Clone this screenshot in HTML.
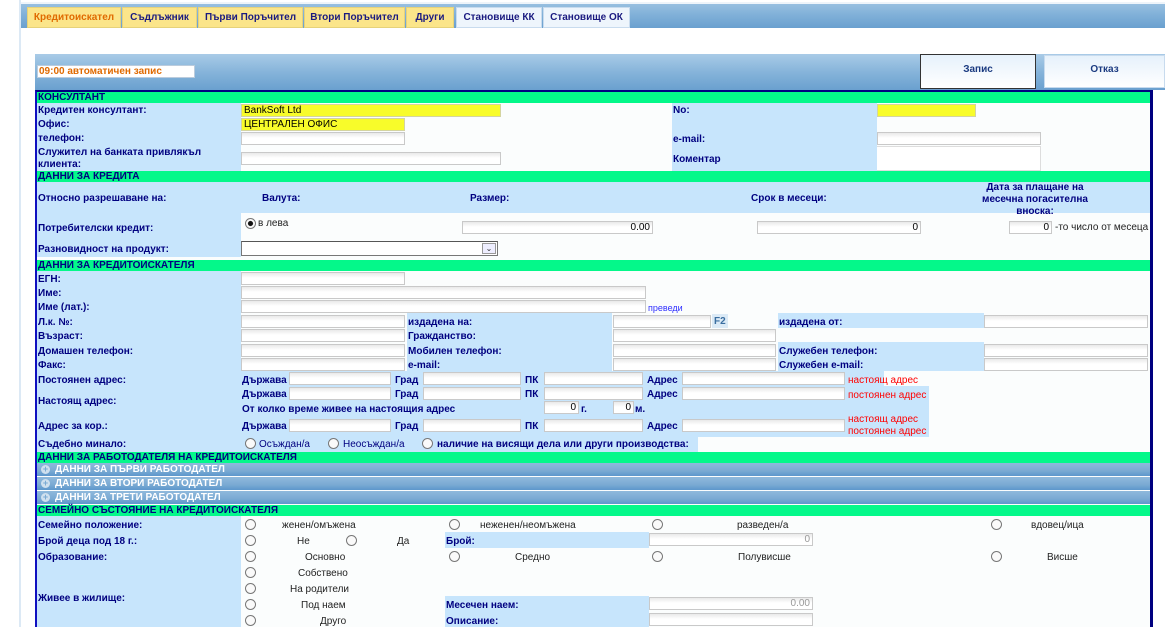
<!DOCTYPE html>
<html><head><meta charset="utf-8">
<style>
*{margin:0;padding:0;box-sizing:border-box}
body{width:1165px;height:627px;overflow:hidden;background:#fff;font-family:"Liberation Sans",Arial,sans-serif;position:relative}
div,span{position:absolute}
.t{font-weight:bold;font-size:10px;color:#000080;white-space:nowrap;line-height:12px;padding-top:1px}
.n{font-size:10px;color:#222;white-space:nowrap;line-height:12px;padding-top:1px}
.r{font-size:10px;color:#f00;white-space:nowrap;line-height:12px;padding-top:1px}
.lb{background:#c7e5fc}
.g{left:37px;width:1113px;height:11px;background:#04f88a;font-weight:bold;font-size:10px;color:#000080;line-height:12px;padding-left:1px}
.i{height:13px;border:1px solid #c9c9c9;background:linear-gradient(#e9e9e9,#fff 45%);font-size:10px;color:#000;text-align:right;line-height:12px;padding-right:2px}
.y{background:#f8fc2a;border-color:#d4d4a0;text-align:left;padding-left:2px}
.rad{width:11px;height:11px;border:1px solid #777;border-radius:50%;background:#fafafa}
.bar{left:37px;width:1113px;height:13px;background:linear-gradient(#8fb9dc,#7aaad3 60%,#5d97cc);color:#fff;font-weight:bold;font-size:10px;line-height:13px;padding-left:18px}
.bar b{position:absolute;left:4px;top:2px;width:9px;height:9px;border-radius:50%;background:#cfe0ee;color:#7aaad3;font-size:9px;line-height:9px;text-align:center}
.tab{top:7px;height:21px;background:#fbe58a;border:1px solid #e6d27a;font-weight:bold;font-size:10px;color:#1a1a80;text-align:center;line-height:20px}
.tb{background:#eef5fc;border-color:#c8dbee}
</style></head><body>
<div style="left:19px;top:0;width:2px;height:627px;background:#dce9f5"></div>
<div style="left:21px;top:2px;width:1144px;height:26px;background:linear-gradient(#9bc2e2,#80b0d8 50%,#6aa0cf)"></div>
<div style="left:21px;top:2px;width:1144px;height:2px;background:#eef4fa"></div>
<div class="tab" style="left:27px;width:94px;color:#e06a00">Кредитоискател</div>
<div class="tab" style="left:122px;width:75px">Съдлъжник</div>
<div class="tab" style="left:198px;width:105px">Първи Поръчител</div>
<div class="tab" style="left:304px;width:101px">Втори Поръчител</div>
<div class="tab" style="left:406px;width:48px">Други</div>
<div class="tab tb" style="left:456px;width:86px">Становище КК</div>
<div class="tab tb" style="left:543px;width:87px">Становище ОК</div>

<div style="left:35px;top:54px;width:1130px;height:36px;background:linear-gradient(#a9cbe7,#86b4da 50%,#6aa0cf)"></div>
<div style="left:37px;top:65px;width:158px;height:13px;background:#fff;border:1px solid #bcd;font-weight:bold;font-size:10px;color:#e06a00;line-height:11px;padding-left:1px">09:00 автоматичен запис</div>
<div style="left:920px;top:54px;width:116px;height:35px;border:1px solid #333;background:linear-gradient(#e6f1fb,#fff);font-weight:bold;font-size:10px;color:#1a3a80;text-align:center;line-height:29px">Запис</div>
<div style="left:1044px;top:55px;width:121px;height:33px;border:1px solid #c8dbee;background:linear-gradient(#e6f1fb,#fff);font-weight:bold;font-size:10px;color:#1a3a80;text-align:center;line-height:27px">Отказ</div>

<div style="left:35px;top:90px;width:1118px;height:537px;background:#fbfdfd;border-left:2px solid #1010c0;border-right:3px solid #000080;border-top:2px solid #000080"></div>

<div class="g" style="top:92px">КОНСУЛТАНТ</div>
<div class="lb" style="left:37px;top:103px;width:204px;height:68px"></div>
<div class="lb" style="left:672px;top:103px;width:205px;height:68px"></div>
<div class="t" style="left:38px;top:104px">Кредитен консултант:</div>
<div class="i y" style="left:241px;top:104px;width:260px">BankSoft Ltd</div>
<div class="t" style="left:673px;top:104px">No:</div>
<div class="i y" style="left:877px;top:104px;width:99px"></div>
<div class="t" style="left:38px;top:118px">Офис:</div>
<div class="i y" style="left:241px;top:118px;width:164px">ЦЕНТРАЛЕН ОФИС</div>
<div class="t" style="left:38px;top:132px">телефон:</div>
<div class="i" style="left:241px;top:132px;width:164px"></div>
<div class="t" style="left:673px;top:133px">e-mail:</div>
<div class="i" style="left:877px;top:132px;width:164px"></div>
<div class="t" style="left:38px;top:146px">Служител на банката привлякъл<br>клиента:</div>
<div class="i" style="left:241px;top:152px;width:260px"></div>
<div class="t" style="left:673px;top:153px">Коментар</div>
<div style="left:877px;top:146px;width:164px;height:25px;background:#fff;border:1px solid #ddd;border-left:none"></div>

<div class="g" style="top:171px">ДАННИ ЗА КРЕДИТА</div>
<div class="lb" style="left:37px;top:182px;width:1113px;height:31px"></div>
<div class="lb" style="left:37px;top:213px;width:204px;height:44px"></div>
<div class="t" style="left:38px;top:192px">Относно разрешаване на:</div>
<div class="t" style="left:262px;top:192px">Валута:</div>
<div class="t" style="left:470px;top:192px">Размер:</div>
<div class="t" style="left:751px;top:192px">Срок в месеци:</div>
<div class="t" style="left:970px;top:181px;width:130px;text-align:center">Дата за плащане на<br>месечна погасителна<br>вноска:</div>
<div class="t" style="left:38px;top:222px">Потребителски кредит:</div>
<div class="rad" style="left:245px;top:218px;background:radial-gradient(#111 35%,#fafafa 45%)"></div>
<div class="n" style="left:258px;top:217px">в лева</div>
<div class="i" style="left:462px;top:221px;width:191px">0.00</div>
<div class="i" style="left:757px;top:221px;width:164px">0</div>
<div class="i" style="left:1009px;top:221px;width:43px">0</div>
<div class="n" style="left:1055px;top:221px">-то число от месеца</div>
<div class="t" style="left:38px;top:243px">Разновидност на продукт:</div>
<div style="left:241px;top:241px;width:257px;height:15px;background:#fff;border:1px solid #777;border-top-color:#555"></div>
<div style="left:482px;top:243px;width:14px;height:11px;border:1px solid #999;background:#eef;font-size:8px;text-align:center;line-height:10px;color:#333">&#8964;</div>

<div class="g" style="top:260px">ДАННИ ЗА КРЕДИТОИСКАТЕЛЯ</div>
<div class="lb" style="left:37px;top:271px;width:204px;height:181px"></div>
<div class="t" style="left:38px;top:273px">ЕГН:</div>
<div class="i" style="left:241px;top:272px;width:164px"></div>
<div class="t" style="left:38px;top:287px">Име:</div>
<div class="i" style="left:241px;top:286px;width:405px"></div>
<div class="t" style="left:38px;top:301px">Име (лат.):</div>
<div class="i" style="left:241px;top:300px;width:405px"></div>
<div class="n" style="left:648px;top:301px;color:#3030ff;font-size:9px">преведи</div>

<div class="lb" style="left:407px;top:313px;width:205px;height:58px"></div>
<div class="lb" style="left:778px;top:313px;width:206px;height:15px"></div>
<div class="lb" style="left:778px;top:342px;width:206px;height:29px"></div>
<div class="t" style="left:38px;top:316px">Л.к. №:</div>
<div class="i" style="left:241px;top:315px;width:164px"></div>
<div class="t" style="left:408px;top:316px">издадена на:</div>
<div class="i" style="left:613px;top:315px;width:98px"></div>
<div class="t" style="left:712px;top:314px;width:16px;height:14px;background:#dbeaf6;color:#3a6ea0;line-height:13px;padding-left:2px">F2</div>
<div class="t" style="left:779px;top:316px">издадена от:</div>
<div class="i" style="left:984px;top:315px;width:164px"></div>
<div class="t" style="left:38px;top:330px">Възраст:</div>
<div class="i" style="left:241px;top:329px;width:164px"></div>
<div class="t" style="left:408px;top:330px">Гражданство:</div>
<div class="i" style="left:613px;top:329px;width:163px"></div>
<div class="t" style="left:38px;top:345px">Домашен телефон:</div>
<div class="i" style="left:241px;top:344px;width:164px"></div>
<div class="t" style="left:408px;top:345px">Мобилен телефон:</div>
<div class="i" style="left:613px;top:344px;width:163px"></div>
<div class="t" style="left:779px;top:345px">Служебен телефон:</div>
<div class="i" style="left:984px;top:344px;width:164px"></div>
<div class="t" style="left:38px;top:359px">Факс:</div>
<div class="i" style="left:241px;top:358px;width:164px"></div>
<div class="t" style="left:408px;top:359px">e-mail:</div>
<div class="i" style="left:613px;top:358px;width:163px"></div>
<div class="t" style="left:779px;top:359px">Служебен e-mail:</div>
<div class="i" style="left:984px;top:358px;width:164px"></div>

<div class="lb" style="left:241px;top:371px;width:643px;height:15px"></div>
<div class="lb" style="left:241px;top:386px;width:688px;height:51px"></div>
<div class="lb" style="left:241px;top:437px;width:457px;height:15px"></div>
<div class="t" style="left:38px;top:374px">Постоянен адрес:</div>
<div class="t" style="left:242px;top:374px">Държава</div>
<div class="i" style="left:289px;top:372px;width:102px"></div>
<div class="t" style="left:395px;top:374px">Град</div>
<div class="i" style="left:423px;top:372px;width:98px"></div>
<div class="t" style="left:525px;top:374px">ПК</div>
<div class="i" style="left:544px;top:372px;width:99px"></div>
<div class="t" style="left:647px;top:374px">Адрес</div>
<div class="i" style="left:682px;top:372px;width:163px"></div>
<div class="r" style="left:848px;top:374px">настоящ адрес</div>

<div class="t" style="left:38px;top:395px">Настоящ адрес:</div>
<div class="t" style="left:242px;top:388px">Държава</div>
<div class="i" style="left:289px;top:387px;width:102px"></div>
<div class="t" style="left:395px;top:388px">Град</div>
<div class="i" style="left:423px;top:387px;width:98px"></div>
<div class="t" style="left:525px;top:388px">ПК</div>
<div class="i" style="left:544px;top:387px;width:99px"></div>
<div class="t" style="left:647px;top:388px">Адрес</div>
<div class="i" style="left:682px;top:387px;width:163px"></div>
<div class="r" style="left:848px;top:389px">постоянен адрес</div>
<div class="t" style="left:242px;top:403px">От колко време живее на настоящия адрес</div>
<div class="i" style="left:544px;top:401px;width:35px">0</div>
<div class="t" style="left:581px;top:403px">г.</div>
<div class="i" style="left:613px;top:401px;width:21px">0</div>
<div class="t" style="left:635px;top:403px">м.</div>

<div class="t" style="left:38px;top:420px">Адрес за кор.:</div>
<div class="t" style="left:242px;top:420px">Държава</div>
<div class="i" style="left:289px;top:419px;width:102px"></div>
<div class="t" style="left:395px;top:420px">Град</div>
<div class="i" style="left:423px;top:419px;width:98px"></div>
<div class="t" style="left:525px;top:420px">ПК</div>
<div class="i" style="left:544px;top:419px;width:99px"></div>
<div class="t" style="left:647px;top:420px">Адрес</div>
<div class="i" style="left:682px;top:419px;width:163px"></div>
<div class="r" style="left:848px;top:413px">настоящ адрес<br>постоянен адрес</div>

<div class="t" style="left:38px;top:438px">Съдебно минало:</div>
<div class="rad" style="left:245px;top:438px"></div>
<div class="t" style="left:259px;top:438px;font-weight:normal">Осъждан/а</div>
<div class="rad" style="left:328px;top:438px"></div>
<div class="t" style="left:343px;top:438px;font-weight:normal">Неосъждан/а</div>
<div class="rad" style="left:422px;top:438px"></div>
<div class="t" style="left:437px;top:438px">наличие на висящи дела или други производства:</div>

<div class="g" style="top:452px">ДАННИ ЗА РАБОТОДАТЕЛЯ НА КРЕДИТОИСКАТЕЛЯ</div>
<div class="bar" style="top:463px"><b>+</b>ДАННИ ЗА ПЪРВИ РАБОТОДАТЕЛ</div>
<div class="bar" style="top:477px"><b>+</b>ДАННИ ЗА ВТОРИ РАБОТОДАТЕЛ</div>
<div class="bar" style="top:491px"><b>+</b>ДАННИ ЗА ТРЕТИ РАБОТОДАТЕЛ</div>

<div class="g" style="top:505px">СЕМЕЙНО СЪСТОЯНИЕ НА КРЕДИТОИСКАТЕЛЯ</div>
<div class="lb" style="left:37px;top:516px;width:204px;height:111px"></div>
<div class="lb" style="left:445px;top:532px;width:204px;height:16px"></div>
<div class="lb" style="left:445px;top:596px;width:204px;height:31px"></div>
<div class="t" style="left:38px;top:519px">Семейно положение:</div>
<div class="rad" style="left:245px;top:519px"></div><div class="n" style="left:282px;top:519px">женен/омъжена</div>
<div class="rad" style="left:449px;top:519px"></div><div class="n" style="left:480px;top:519px">неженен/неомъжена</div>
<div class="rad" style="left:652px;top:519px"></div><div class="n" style="left:737px;top:519px">разведен/а</div>
<div class="rad" style="left:991px;top:519px"></div><div class="n" style="left:1031px;top:519px">вдовец/ица</div>
<div class="t" style="left:38px;top:535px">Брой деца под 18 г.:</div>
<div class="rad" style="left:245px;top:535px"></div><div class="n" style="left:297px;top:535px">Не</div>
<div class="rad" style="left:346px;top:535px"></div><div class="n" style="left:397px;top:535px">Да</div>
<div class="t" style="left:446px;top:535px">Брой:</div>
<div class="i" style="left:649px;top:533px;width:164px;color:#999">0</div>
<div class="t" style="left:38px;top:551px">Образование:</div>
<div class="rad" style="left:245px;top:551px"></div><div class="n" style="left:305px;top:551px">Основно</div>
<div class="rad" style="left:449px;top:551px"></div><div class="n" style="left:515px;top:551px">Средно</div>
<div class="rad" style="left:652px;top:551px"></div><div class="n" style="left:738px;top:551px">Полувисше</div>
<div class="rad" style="left:991px;top:551px"></div><div class="n" style="left:1047px;top:551px">Висше</div>
<div class="rad" style="left:245px;top:567px"></div><div class="n" style="left:298px;top:567px">Собствено</div>
<div class="rad" style="left:245px;top:583px"></div><div class="n" style="left:290px;top:583px">На родители</div>
<div class="t" style="left:38px;top:592px">Живее в жилище:</div>
<div class="rad" style="left:245px;top:599px"></div><div class="n" style="left:301px;top:599px">Под наем</div>
<div class="t" style="left:446px;top:599px">Месечен наем:</div>
<div class="i" style="left:649px;top:597px;width:164px;color:#999">0.00</div>
<div class="rad" style="left:245px;top:615px"></div><div class="n" style="left:320px;top:615px">Друго</div>
<div class="t" style="left:446px;top:615px">Описание:</div>
<div class="i" style="left:649px;top:613px;width:164px"></div>
</body></html>
